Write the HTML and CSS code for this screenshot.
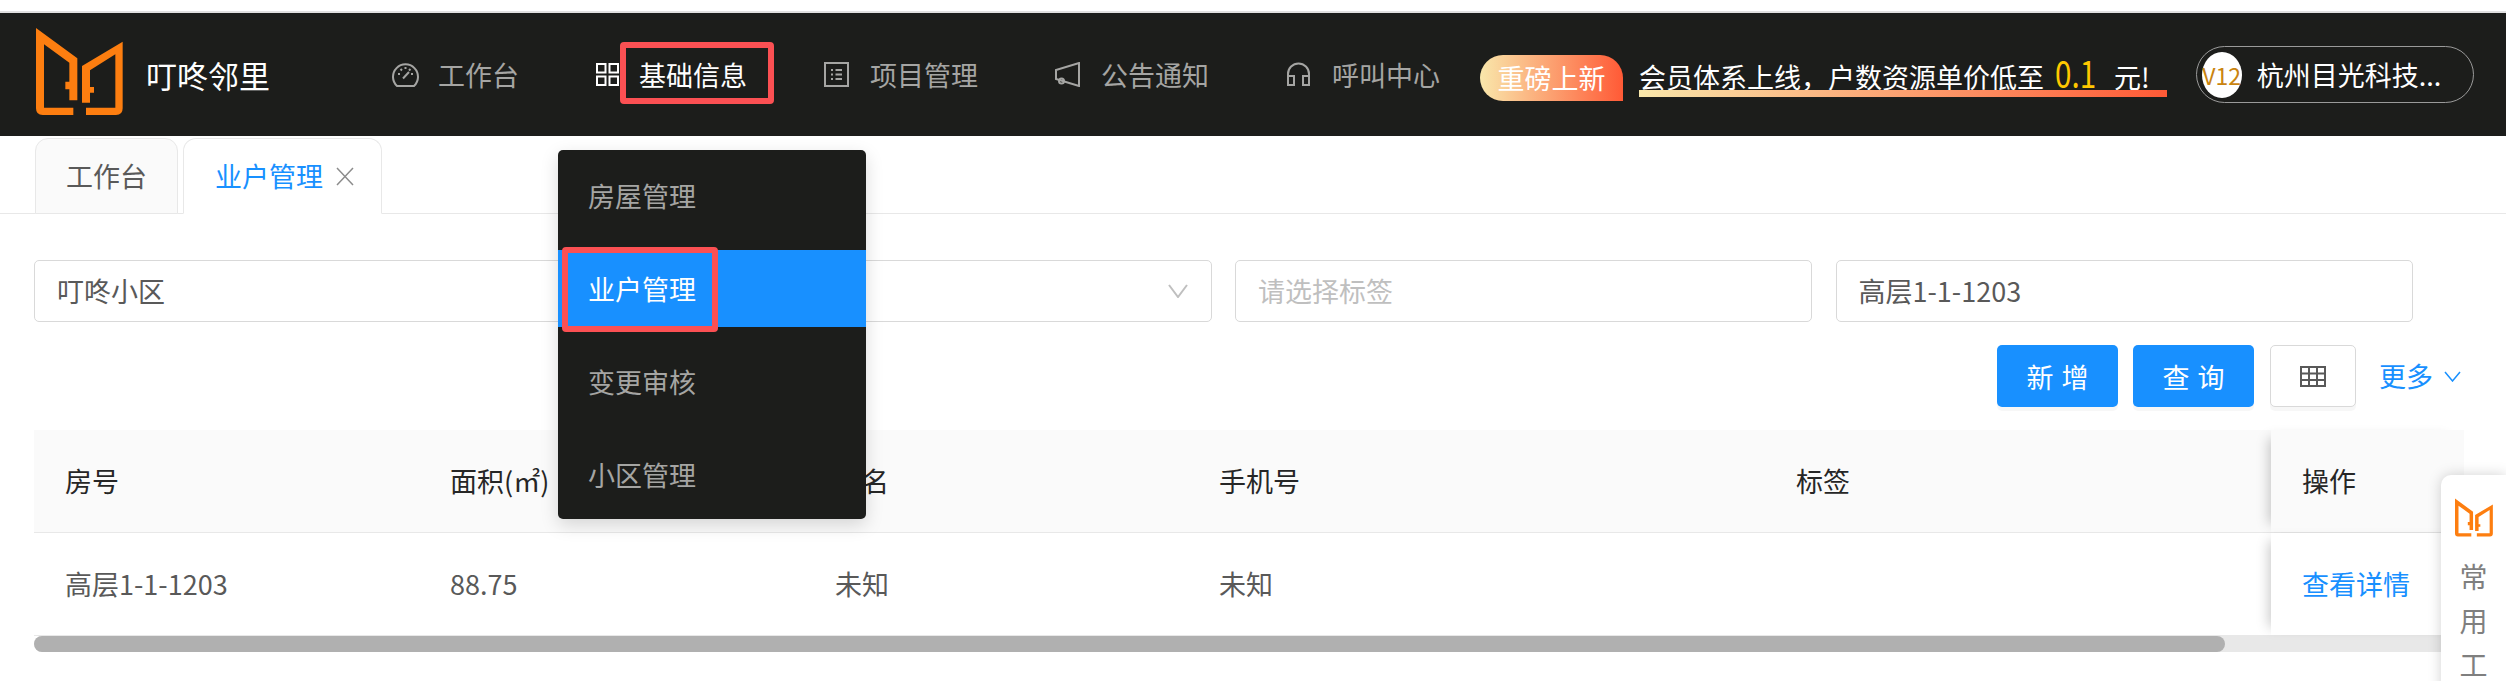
FILE: index.html
```html
<!DOCTYPE html>
<html lang="zh-CN">
<head>
    <meta charset="UTF-8">
    <meta name="viewport" content="width=device-width, initial-scale=1.0">
    <title>业户管理 - 叮咚邻里</title>
    <link rel="stylesheet" href="styles.css">
</head>
<body>

<svg class="defs" width="0" height="0" aria-hidden="true">
    <symbol id="logo" viewBox="108 81 261 261">
        <path d="M108 81 L232 172 V298 H208 V265 H196 V242 H208 V185 L132 130 V320 H220 V342 H128 Q108 342 108 322 Z"/>
        <path d="M368 122 V322 Q368 342 348 342 H258 V320 H346 V160 L270 208 V258 H282 V275 H270 V305 H246 V195 Z"/>
    </symbol>
</svg>

<header class="topbar">
    <div class="brand">
        <svg class="brand-logo"><use href="#logo"/></svg>
        <span class="brand-name">叮咚邻里</span>
    </div>

    <nav class="nav">
        <a class="nav-item">
            <svg class="nav-icon nav-icon-wide" viewBox="0 0 27 25">
                <path d="M5 24 H22 A12.5 12.5 0 1 0 5 24 Z"/>
                <path d="M13.5 5 V7 M6 12 H8 M19 12 H21 M8.500 7 L10 8.500 M18.500 7 L17 8.500 M11 16.500 L17 10"/>
            </svg>
            <span class="nav-label">工作台</span>
        </a>
        <a class="nav-item nav-item-active">
            <svg class="nav-icon nav-icon-small" viewBox="0 0 23 23">
                <rect x="1" y="1" width="8.500" height="8.500"/>
                <rect x="13.500" y="1" width="8.500" height="8.500"/>
                <rect x="1" y="13.500" width="8.500" height="8.500"/>
                <rect x="13.500" y="13.500" width="8.500" height="8.500"/>
            </svg>
            <span class="nav-label">基础信息<i class="mark mark-nav"></i></span>
        </a>
        <a class="nav-item">
            <svg class="nav-icon" viewBox="0 0 25 25">
                <rect x="1" y="1" width="23" height="23"/>
                <path d="M7 8 H9 M7 12.500 H9 M7 17 H9 M11.500 8 H18 M11.500 12.500 H18 M11.500 17 H18"/>
            </svg>
            <span class="nav-label">项目管理</span>
        </a>
        <a class="nav-item">
            <svg class="nav-icon" viewBox="0 0 25 25">
                <path d="M24 1 V24 L1 17 V8 Z"/>
                <circle cx="6.500" cy="19" r="2.500"/>
            </svg>
            <span class="nav-label">公告通知</span>
        </a>
        <a class="nav-item">
            <svg class="nav-icon" viewBox="0 0 25 25">
                <path d="M2 22 V12 A10.500 10.500 0 0 1 23 12 V22"/>
                <rect x="2" y="14" width="6" height="9"/>
                <rect x="17" y="14" width="6" height="9"/>
            </svg>
            <span class="nav-label">呼叫中心</span>
        </a>
    </nav>

    <span class="promo-badge">重磅上新</span>
    <div class="promo-text">会员体系上线，户数资源单价低至<b class="promo-num">0.1</b>元!</div>

    <div class="account">
        <span class="account-level">V12</span>
        <span class="account-name">杭州目光科技...</span>
    </div>
</header>

<div class="tabs">
    <div class="tab">工作台</div>
    <div class="tab tab-active">业户管理
        <svg class="tab-close" viewBox="0 0 18 19"><path d="M1 1 L17 18 M17 1 L1 18"/></svg>
    </div>
</div>

<main class="content">
    <div class="filters">
        <div class="field">叮咚小区</div>
        <div class="field">
            <svg class="chevron" viewBox="0 0 20 14"><path d="M1 1 L10 13 L19 1"/></svg>
        </div>
        <div class="field field-empty">请选择标签</div>
        <div class="field">高层1-1-1203</div>
    </div>

    <div class="toolbar">
        <button class="btn btn-primary">新 增</button>
        <button class="btn btn-primary">查 询</button>
        <button class="btn btn-icon">
            <svg class="table-icon" viewBox="0 0 26 21">
                <path d="M1 1 H25 V20 H1 Z M1 7.500 H25 M1 14 H25 M9 1 V20 M17 1 V20"/>
            </svg>
        </button>
        <a class="more">更多
            <svg class="more-arrow" viewBox="0 0 17 11"><path d="M1 1 L8.500 10 L16 1"/></svg>
        </a>
    </div>

    <div class="table">
        <div class="table-row table-head">
            <div class="cell">房号</div>
            <div class="cell">面积(㎡)</div>
            <div class="cell">姓名</div>
            <div class="cell">手机号</div>
            <div class="cell">标签</div>
            <div class="cell cell-fixed">操作</div>
        </div>
        <div class="table-row">
            <div class="cell">高层1-1-1203</div>
            <div class="cell">88.75</div>
            <div class="cell">未知</div>
            <div class="cell">未知</div>
            <div class="cell"></div>
            <div class="cell cell-fixed"><a class="link">查看详情</a></div>
        </div>
        <div class="scrollbar"><div class="scrollbar-thumb"></div></div>
    </div>
</main>

<div class="dropdown">
    <a class="dropdown-item">房屋管理</a>
    <a class="dropdown-item dropdown-item-active">业户管理<i class="mark mark-menu"></i></a>
    <a class="dropdown-item">变更审核</a>
    <a class="dropdown-item">小区管理</a>
</div>

<aside class="toolbox">
    <svg class="toolbox-logo"><use href="#logo"/></svg>
    <span>常</span>
    <span>用</span>
    <span>工</span>
</aside>

</body>
</html>
```

FILE: styles.css
```css
html, body { height: 100%; overflow: hidden; }
body { margin: 0; padding-top: 11px; box-sizing: border-box; background: #fff; color: #595959; font-family: "Noto Sans CJK SC", "Noto Sans", sans-serif; font-size: 27px; line-height: 36px; }
a { cursor: pointer; }
.defs { position: absolute; }

/* top bar */
.topbar { display: flex; align-items: center; height: 123px; padding-left: 36px; background: #1c1d1b; border-top: 2px solid #e0e0e0; }
.brand { display: flex; align-items: center; width: 356px; }
.brand-logo { width: 87px; height: 87px; margin-top: -6px; fill: #fd7e10; }
.brand-name { margin-left: 23px; color: #fff; font-size: 31px; }
.nav { display: flex; gap: 77px; }
.nav-item { display: flex; align-items: center; gap: 21px; color: #a5a5a3; }
.nav-icon { width: 25px; height: 25px; fill: none; stroke: #a5a5a3; stroke-width: 2; }
.nav-icon-wide { width: 27px; margin-right: -2px; }
.nav-icon-small { width: 23px; height: 23px; margin-right: -1px; }
.nav-item-active { color: #fff; }
.nav-item-active .nav-icon { stroke: #fff; }
.nav-label { position: relative; }
.mark { position: absolute; border: 6px solid #fb5053; border-radius: 4px; box-sizing: border-box; }
.mark-nav { left: -19px; right: -27px; top: -15px; bottom: -11px; }
.promo-badge { width: 143px; height: 46px; margin: 7px 0 0 40px; border-radius: 24px 24px 0 24px; background: linear-gradient(90deg, #f9e7ab, #ff5a36); color: #fff; text-align: center; line-height: 46px; }
.promo-text { position: relative; margin-left: 16px; padding-right: 17px; color: #fff; white-space: nowrap; }
.promo-text::after { content: ""; position: absolute; left: 0; right: 0; bottom: -2px; height: 7px; background: linear-gradient(90deg, #f9e7ab, #ff5a36); }
.promo-num { display: inline-block; width: 41px; margin: 0 18px 0 11px; color: #ffc800; font-size: 37px; font-weight: 400; transform: scaleX(0.8); transform-origin: left; }
.account { display: flex; align-items: center; gap: 15px; width: 278px; height: 57px; margin-left: 29px; padding-left: 5px; box-sizing: border-box; border: 1px solid #9a9a9a; border-radius: 29px; color: #fff; }
.account-level { width: 40px; height: 46px; border-radius: 50%; background: #fff; color: #c98410; font-size: 23px; line-height: 46px; text-align: center; }

/* tabs */
.tabs { display: flex; gap: 5px; height: 75px; margin-top: 2px; padding-left: 35px; border-bottom: 1px solid #e8e8e8; }
.tab { display: flex; align-items: center; gap: 13px; height: 76px; padding: 0 30px; box-sizing: border-box; background: #fafafa; border: 1px solid #e8e8e8; border-radius: 13px 13px 0 0; }
.tab-active { padding: 0 27px 0 31px; background: #fff; border-bottom-color: #fff; color: #1890ff; }
.tab-close { width: 18px; height: 19px; fill: none; stroke: #8c8c8c; stroke-width: 1.500; }

/* filters and buttons */
.content { padding: 46px 42px 0 34px; }
.filters { display: grid; grid-template-columns: repeat(4, 577px); gap: 23.500px; }
.field { position: relative; height: 62px; padding: 0 22px; box-sizing: border-box; border: 1.500px solid #d9d9d9; border-radius: 5px; line-height: 59px; }
.field-empty { color: #bfbfbf; }
.chevron { position: absolute; right: 23px; top: 23px; width: 20px; height: 14px; fill: none; stroke: #bfbfbf; stroke-width: 2; }
.toolbar { display: flex; justify-content: flex-end; align-items: center; gap: 15px; margin-top: 23px; }
.btn { height: 62px; padding: 0; border-radius: 5px; font-family: inherit; font-size: 27px; word-spacing: 2px; cursor: pointer; box-shadow: 0 4px 0 rgba(0, 0, 0, 0.03); }
.btn-primary { width: 121px; background: #1890ff; border: 0; color: #fff; }
.btn-icon { display: flex; align-items: center; justify-content: center; width: 86px; margin-left: 1px; background: #fff; border: 1.500px solid #d9d9d9; }
.table-icon { width: 26px; height: 21px; fill: none; stroke: #595959; stroke-width: 2; }
.more { display: flex; align-items: center; gap: 11px; margin: 0 3px 0 8px; color: #1890ff; }
.more-arrow { width: 17px; height: 11px; fill: none; stroke: #1890ff; stroke-width: 1.500; }

/* table */
.table { margin-top: 23px; }
.table-row { display: grid; grid-template-columns: 385px 385px 384px 577px 506px 193px; height: 103px; border-bottom: 1px solid #e8e8e8; box-sizing: border-box; align-items: stretch; }
.table-head { background: #fafafa; color: #262626; }
.cell { display: flex; align-items: center; padding-left: 31px; }
.cell-fixed { position: relative; background: inherit; box-shadow: -10px 0 12px -8px rgba(0, 0, 0, 0.22); }
.table-row:not(.table-head) .cell-fixed { background: #fff; }
.link { color: #1890ff; }
.scrollbar { height: 16px; border-radius: 8px; background: #e8e8e8; }
.scrollbar-thumb { width: 2191px; height: 16px; border-radius: 8px; background: #b0b0b0; }

/* dropdown over the nav */
.dropdown { position: absolute; left: 558px; top: 150px; display: flex; flex-direction: column; gap: 16px; width: 308px; padding: 7px 0 6px; box-sizing: border-box; background: #1c1d1b; border-radius: 5px; box-shadow: 0 6px 18px rgba(0, 0, 0, 0.15); }
.dropdown-item { position: relative; height: 77px; padding-left: 30px; color: #a5a5a3; line-height: 77px; }
.dropdown-item-active { background: #1890ff; color: #fff; }
.mark-menu { left: 4px; top: -3px; width: 156px; height: 85px; }

/* side tools */
.toolbox { position: absolute; left: 2441px; top: 475px; display: flex; flex-direction: column; align-items: center; gap: 8px; width: 65px; height: 260px; padding-top: 23px; box-sizing: border-box; background: #fff; border-radius: 10px 0 0 0; box-shadow: 0 0 14px rgba(0, 0, 0, 0.18); color: #7f7f7f; font-size: 28px; }
.toolbox-logo { width: 38px; height: 39px; margin-bottom: 13px; fill: #fd7e10; }
```
